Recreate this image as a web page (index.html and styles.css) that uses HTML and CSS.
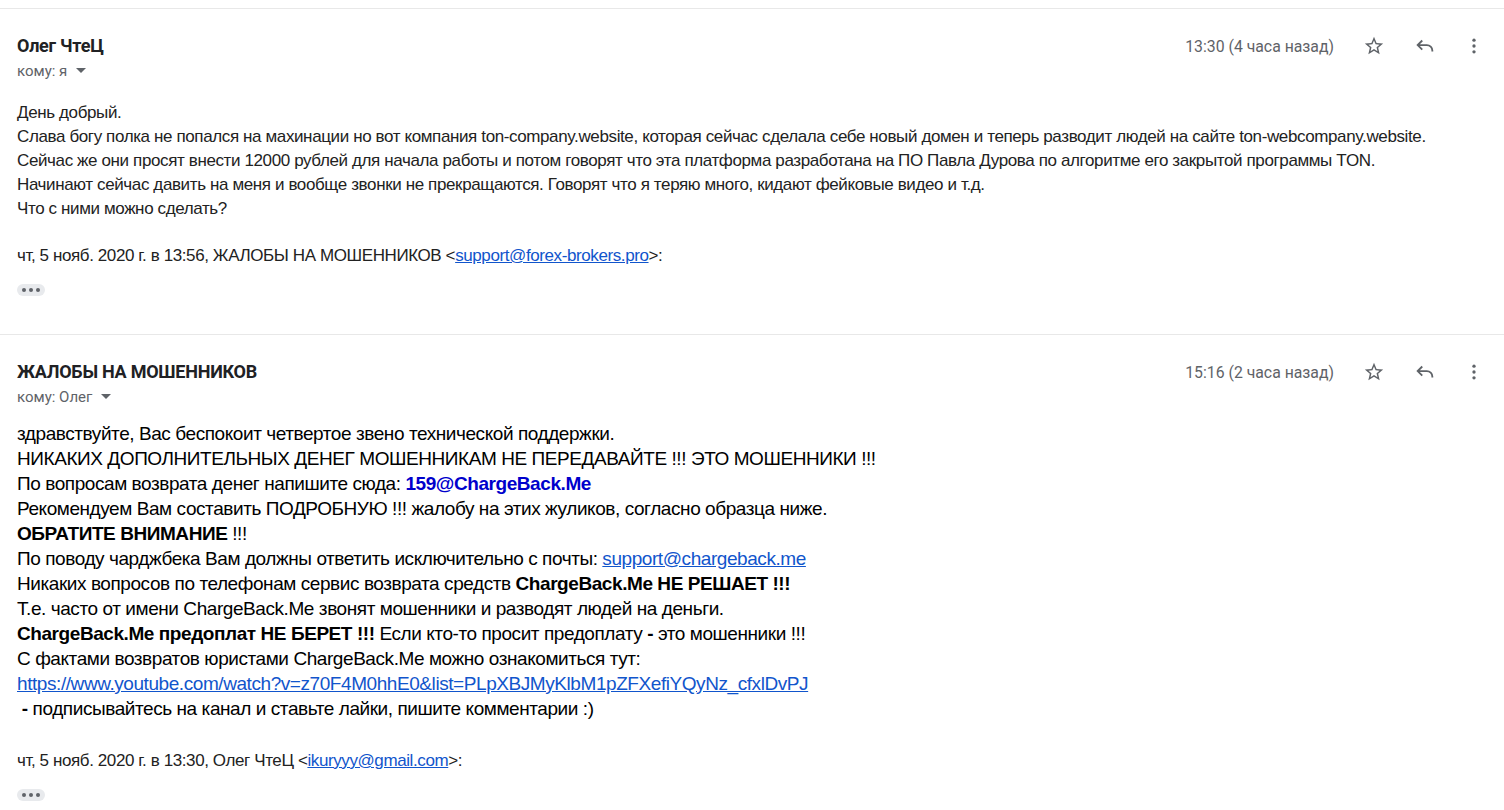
FILE: index.html
```html
<!DOCTYPE html>
<html lang="ru">
<head>
    <meta charset="UTF-8">
    <title>Переписка</title>
    <link rel="stylesheet" href="styles.css">
</head>
<body>
    <div class="thread">
        <div class="message">
            <div class="msg-head">
                <div class="sender">
                    <div class="sender-name">Олег ЧтеЦ</div>
                    <div class="recipient">кому: я <span class="caret"></span></div>
                </div>
                <div class="msg-meta">
                    <span class="msg-time">13:30 (4 часа назад)</span>
                    <span class="icon-btn">
                        <svg width="22" height="22" viewBox="0 0 24 24"><path fill="#5f6368" d="M22 9.24l-7.19-.62L12 2 9.19 8.63 2 9.24l5.46 4.73L5.82 21 12 17.27 18.18 21l-1.63-7.03L22 9.24zM12 15.4l-3.76 2.27 1-4.28-3.32-2.88 4.38-.38L12 6.1l1.71 4.04 4.38.38-3.32 2.88 1 4.28L12 15.4z"/></svg>
                    </span>
                    <span class="icon-btn">
                        <svg width="22" height="22" viewBox="0 0 24 24"><path fill="none" stroke="#5f6368" stroke-width="2" d="M9 6l-5 5 5 5M4 11h10a6 6 0 0 1 6 6v1"/></svg>
                    </span>
                    <span class="icon-btn dots">
                        <svg width="20" height="20" viewBox="0 0 24 24"><circle cx="12" cy="5" r="2" fill="#5f6368"/><circle cx="12" cy="12" r="2" fill="#5f6368"/><circle cx="12" cy="19" r="2" fill="#5f6368"/></svg>
                    </span>
                </div>
            </div>
            <div class="body-small">
                <div>День добрый.</div>
                <div>Слава богу полка не попался на махинации но вот компания ton-company.website, которая сейчас сделала себе новый домен и теперь разводит людей на сайте ton-webcompany.website.</div>
                <div>Сейчас же они просят внести 12000 рублей для начала работы и потом говорят что эта платформа разработана на ПО Павла Дурова по алгоритме его закрытой программы TON.</div>
                <div>Начинают сейчас давить на меня и вообще звонки не прекращаются. Говорят что я теряю много, кидают фейковые видео и т.д.</div>
                <div>Что с ними можно сделать?</div>
            </div>
            <div class="quote-line">чт, 5 нояб. 2020 г. в 13:56, ЖАЛОБЫ НА МОШЕННИКОВ &lt;<a href="#">support@forex-brokers.pro</a>&gt;:</div>
            <div class="more-dots"><i></i><i></i><i></i></div>
        </div>

        <div class="message">
            <div class="msg-head">
                <div class="sender">
                    <div class="sender-name">ЖАЛОБЫ НА МОШЕННИКОВ</div>
                    <div class="recipient">кому: Олег <span class="caret"></span></div>
                </div>
                <div class="msg-meta">
                    <span class="msg-time">15:16 (2 часа назад)</span>
                    <span class="icon-btn">
                        <svg width="22" height="22" viewBox="0 0 24 24"><path fill="#5f6368" d="M22 9.24l-7.19-.62L12 2 9.19 8.63 2 9.24l5.46 4.73L5.82 21 12 17.27 18.18 21l-1.63-7.03L22 9.24zM12 15.4l-3.76 2.27 1-4.28-3.32-2.88 4.38-.38L12 6.1l1.71 4.04 4.38.38-3.32 2.88 1 4.28L12 15.4z"/></svg>
                    </span>
                    <span class="icon-btn">
                        <svg width="22" height="22" viewBox="0 0 24 24"><path fill="none" stroke="#5f6368" stroke-width="2" d="M9 6l-5 5 5 5M4 11h10a6 6 0 0 1 6 6v1"/></svg>
                    </span>
                    <span class="icon-btn dots">
                        <svg width="20" height="20" viewBox="0 0 24 24"><circle cx="12" cy="5" r="2" fill="#5f6368"/><circle cx="12" cy="12" r="2" fill="#5f6368"/><circle cx="12" cy="19" r="2" fill="#5f6368"/></svg>
                    </span>
                </div>
            </div>
            <div class="body-large">
                <div>здравствуйте, Вас беспокоит четвертое звено технической поддержки.</div>
                <div>НИКАКИХ ДОПОЛНИТЕЛЬНЫХ ДЕНЕГ МОШЕННИКАМ НЕ ПЕРЕДАВАЙТЕ !!! ЭТО МОШЕННИКИ !!!</div>
                <div>По вопросам возврата денег напишите сюда: <b class="blue">159@ChargeBack.Me</b></div>
                <div>Рекомендуем Вам составить ПОДРОБНУЮ !!! жалобу на этих жуликов, согласно образца ниже.</div>
                <div><b>ОБРАТИТЕ ВНИМАНИЕ</b> !!!</div>
                <div>По поводу чарджбека Вам должны ответить исключительно с почты: <a href="#">support@chargeback.me</a></div>
                <div>Никаких вопросов по телефонам сервис возврата средств <b>ChargeBack.Me НЕ РЕШАЕТ !!!</b></div>
                <div>Т.е. часто от имени ChargeBack.Me звонят мошенники и разводят людей на деньги.</div>
                <div><b>ChargeBack.Me предоплат НЕ БЕРЕТ !!!</b> Если кто-то просит предоплату <b>-</b> это мошенники !!!</div>
                <div>С фактами возвратов юристами ChargeBack.Me можно ознакомиться тут:</div>
                <div><a href="#">https://www.youtube.com/watch?v=z70F4M0hhE0&amp;list=PLpXBJMyKlbM1pZFXefiYQyNz_cfxlDvPJ</a></div>
                <div>&nbsp;<b>-</b> подписывайтесь на канал и ставьте лайки, пишите комментарии :)</div>
            </div>
            <div class="quote-line">чт, 5 нояб. 2020 г. в 13:30, Олег ЧтеЦ &lt;<a href="#">ikuryyy@gmail.com</a>&gt;:</div>
            <div class="more-dots"><i></i><i></i><i></i></div>
        </div>
    </div>
</body>
</html>
```

FILE: styles.css
```css
body {
    margin: 0;
    background: #fff;
    font-family: "Liberation Sans", Arial, sans-serif;
    color: #222;
}

.thread {
    padding-top: 8px;
}

.message {
    border-top: 1px solid #e8e8e8;
    padding: 0 0 0 17px;
}

.msg-head {
    display: flex;
    justify-content: space-between;
    align-items: flex-start;
    padding-top: 27px;
}

.sender-name {
    font-family: Roboto, sans-serif;
    font-weight: 700;
    font-size: 18px;
    line-height: 20px;
    color: #202124;
    letter-spacing: -0.25px;
}

.recipient {
    font-family: Roboto, sans-serif;
    font-size: 15px;
    line-height: 20px;
    margin-top: 5px;
    color: #5f6368;
}

.caret {
    display: inline-block;
    width: 0;
    height: 0;
    border-left: 5px solid transparent;
    border-right: 5px solid transparent;
    border-top: 5px solid #5f6368;
    margin-left: 5px;
    vertical-align: 3px;
}

.msg-meta {
    display: flex;
    align-items: center;
    padding-right: 18px;
    margin-top: -4px;
}

.msg-time {
    font-family: Roboto, sans-serif;
    font-size: 15.8px;
    color: #5f6368;
    margin-right: 14px;
}

.icon-btn {
    width: 51px;
    height: 28px;
    display: flex;
    align-items: center;
    justify-content: center;
}

.icon-btn.dots {
    width: 34px;
    justify-content: flex-end;
    padding-right: 2px;
}

.body-small {
    font-size: 17px;
    line-height: 24px;
    margin-top: 20px;
    letter-spacing: -0.38px;
    color: #222;
}

.body-large {
    font-size: 19px;
    line-height: 25px;
    margin-top: 14px;
    margin-bottom: 28px;
    letter-spacing: -0.43px;
    color: #000;
}

.blue {
    color: #0000cc;
}

a {
    color: #15c;
}

.quote-line {
    font-size: 17px;
    letter-spacing: -0.4px;
    color: #222;
    margin-top: 23px;
    line-height: 24px;
}

.more-dots {
    display: flex;
    align-items: center;
    justify-content: center;
    gap: 3px;
    width: 28px;
    height: 12px;
    margin-top: 16px;
    margin-bottom: 38px;
    background: #e8eaed;
    border-radius: 6px;
}

.more-dots i {
    width: 4px;
    height: 4px;
    border-radius: 50%;
    background: #5f6368;
}
```
